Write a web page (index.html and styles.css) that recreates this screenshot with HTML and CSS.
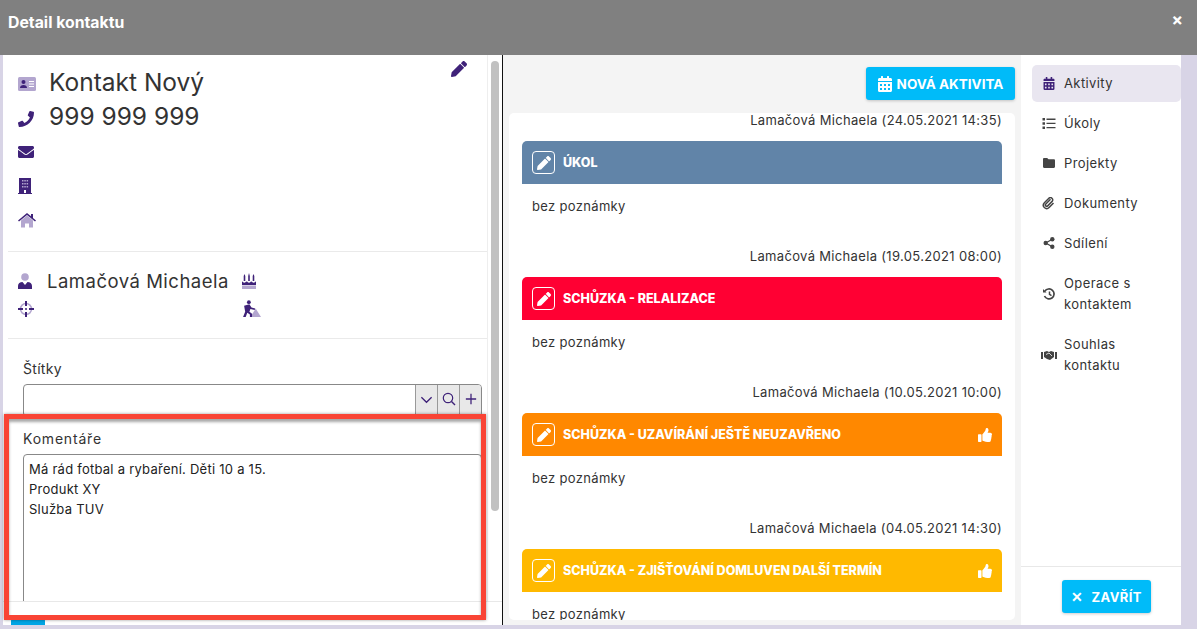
FILE: index.html
```html
<!DOCTYPE html>
<html lang="cs">
<head>
<meta charset="utf-8">
<title>Detail kontaktu</title>
<link rel="stylesheet" href="styles.css">
</head>
<body>
<svg class="defs" width="0" height="0" aria-hidden="true">
  <symbol id="pencil" viewBox="0 0 512 512"><path d="M497.9 142.1l-46.1 46.1c-4.7 4.7-12.3 4.7-17 0l-111-111c-4.7-4.7-4.7-12.3 0-17l46.1-46.1c18.7-18.7 49.1-18.7 67.9 0l60.1 60.1c18.8 18.7 18.8 49.1 0 67.9zM284.2 99.8L21.6 362.4.4 483.9c-2.9 16.4 11.4 30.6 27.8 27.8l121.5-21.3 262.6-262.6c4.7-4.7 4.7-12.3 0-17l-111-111c-4.8-4.7-12.4-4.7-17.1 0z"/></symbol>
  <symbol id="calendar" viewBox="0 0 448 512"><path d="M0 464c0 26.5 21.5 48 48 48h352c26.5 0 48-21.5 48-48V192H0v272zm320-196c0-6.6 5.4-12 12-12h40c6.6 0 12 5.4 12 12v40c0 6.6-5.4 12-12 12h-40c-6.6 0-12-5.4-12-12v-40zm0 128c0-6.6 5.4-12 12-12h40c6.6 0 12 5.4 12 12v40c0 6.6-5.4 12-12 12h-40c-6.6 0-12-5.4-12-12v-40zM192 268c0-6.6 5.4-12 12-12h40c6.6 0 12 5.4 12 12v40c0 6.6-5.4 12-12 12h-40c-6.6 0-12-5.4-12-12v-40zm0 128c0-6.6 5.4-12 12-12h40c6.6 0 12 5.4 12 12v40c0 6.6-5.4 12-12 12h-40c-6.6 0-12-5.4-12-12v-40zM64 268c0-6.6 5.4-12 12-12h40c6.6 0 12 5.4 12 12v40c0 6.6-5.4 12-12 12H76c-6.6 0-12-5.4-12-12v-40zm0 128c0-6.6 5.4-12 12-12h40c6.6 0 12 5.4 12 12v40c0 6.6-5.4 12-12 12H76c-6.6 0-12-5.4-12-12v-40zM400 64h-48V16c0-8.8-7.2-16-16-16h-32c-8.8 0-16 7.2-16 16v48H160V16c0-8.8-7.2-16-16-16h-32c-8.8 0-16 7.2-16 16v48H48C21.5 64 0 85.5 0 112v48h448v-48c0-26.5-21.5-48-48-48z"/></symbol>
  <symbol id="thumb" viewBox="0 0 512 512"><path d="M104 224H24c-13.255 0-24 10.745-24 24v240c0 13.255 10.745 24 24 24h80c13.255 0 24-10.745 24-24V248c0-13.255-10.745-24-24-24zM384 81.452c0 42.416-25.97 66.208-33.277 94.548h101.723c33.397 0 59.397 27.746 59.553 58.098.084 17.938-7.546 37.249-19.439 49.197l-.11.11c9.836 23.337 8.237 56.037-9.308 79.469 8.681 25.895-.069 57.704-16.382 74.757 4.298 17.598 2.244 32.575-6.148 44.632C440.202 511.587 389.616 512 346.839 512l-2.845-.001c-48.287-.017-87.806-17.598-119.56-31.725-15.957-7.099-36.821-15.887-52.651-16.178-6.54-.12-11.783-5.457-11.783-11.998v-213.77c0-3.2 1.282-6.271 3.558-8.521 39.614-39.144 56.648-80.587 89.117-113.111 14.804-14.832 20.188-37.236 25.393-58.902C282.515 39.293 291.817 0 312 0c24 0 72 8 72 81.452z"/></symbol>
</svg>

<div class="app">
  <header class="topbar">
    <h1 class="title">Detail kontaktu</h1>
    <span class="close-x">×</span>
  </header>

  <div class="frame">
    <section class="left">
      <div class="left-scroll">
        <div class="left-content">
          <div class="contact">
            <svg class="edit-ic"><use href="#pencil"/></svg>
            <div class="c-row c-row-big">
              <svg class="ic" viewBox="0 0 18 14" width="18" height="14"><rect width="18" height="14" rx="1.5" fill="#b3a6cf"/><circle cx="5.5" cy="5" r="2" fill="#3f2279"/><path d="M2 11c0-2 1.500-3 3.500-3s3.500 1 3.500 3z" fill="#3f2279"/><path d="M11 4.500h5M11 7h5M11 9.500h5" stroke="#fff" stroke-width="1"/></svg>
              <span class="big">Kontakt Nový</span>
            </div>
            <div class="c-row c-row-big">
              <svg class="ic ic-low" viewBox="0 0 512 512" width="16" height="16"><path fill="#3f2279" d="M493.4 24.600l-104-24c-11.300-2.600-22.900 3.300-27.500 13.900l-48 112c-4.200 9.800-1.400 21.300 6.900 28l60.600 49.600c-36 76.700-98.900 140.500-177.200 177.200l-49.600-60.600c-6.800-8.300-18.200-11.100-28-6.900l-112 48C3.900 366.500-2 378.100.6 389.400l24 104C27.100 504.200 36.700 512 48 512c256.100 0 464-207.500 464-464 0-11.200-7.700-20.900-18.600-23.400z"/></svg>
              <span class="big">999 999 999</span>
            </div>
            <div class="c-row">
              <svg class="ic" viewBox="0 0 512 512" width="16" height="16"><path fill="#3f2279" d="M502.300 190.800c3.900-3.100 9.700-.2 9.700 4.700V400c0 26.500-21.500 48-48 48H48c-26.500 0-48-21.500-48-48V195.600c0-5 5.700-7.800 9.700-4.700 22.400 17.400 52.100 39.500 154.100 113.600 21.100 15.400 56.700 47.800 92.200 47.600 35.700.3 72-32.800 92.300-47.600 102-74.100 131.600-96.300 154-113.700zM256 320c23.200.4 56.600-29.200 73.400-41.400 132.700-96.300 142.800-104.700 173.400-128.700 5.800-4.500 9.200-11.500 9.200-18.900v-19c0-26.500-21.500-48-48-48H48C21.500 64 0 85.500 0 112v19c0 7.400 3.400 14.300 9.200 18.900 30.600 23.900 40.700 32.400 173.400 128.700 16.800 12.200 50.200 41.800 73.400 41.400z"/></svg>
            </div>
            <div class="c-row">
              <svg class="ic" viewBox="0 0 14 16" width="14" height="16"><path fill="#3f2279" d="M1 0h12v15h1v1H0v-1h1z"/><g fill="#b3a6cf"><rect x="4" y="2" width="1.500" height="1.500"/><rect x="6.300" y="2" width="1.500" height="1.500"/><rect x="8.600" y="2" width="1.500" height="1.500"/><rect x="4" y="5" width="1.500" height="1.500"/><rect x="6.300" y="5" width="1.500" height="1.500"/><rect x="8.600" y="5" width="1.500" height="1.500"/><rect x="4" y="8" width="1.500" height="1.500"/><rect x="6.300" y="8" width="1.500" height="1.500"/><rect x="8.600" y="8" width="1.500" height="1.500"/></g><rect x="6" y="12" width="2" height="3" fill="#fff"/></svg>
            </div>
            <div class="c-row">
              <svg class="ic" viewBox="0 0 18 15" width="18" height="15"><path fill="#b3a6cf" d="M3 7.500 9 2.500l6 5V14.500h-4v-4H7v4H3z"/><path fill="#3f2279" d="M0 7.500 9 0l4 3.300V1h2v4l3 2.500-1 1.100L9 2 1 8.600z"/></svg>
            </div>
          </div>

          <div class="owner">
            <div class="o-cell">
              <svg class="ic" viewBox="0 0 14 16" width="14" height="16"><circle cx="7" cy="4" r="3.800" fill="#b3a6cf"/><path fill="#3f2279" d="M0 16v-3c0-2.500 2-4 4.500-4L7 12l2.500-3C12 9 14 10.500 14 13v3z"/></svg>
              <span class="owner-name">Lamačová Michaela</span>
            </div>
            <div class="o-cell o-side">
              <svg class="ic" viewBox="0 0 14 16" width="14" height="16"><path fill="#3f2279" d="M2.500 1 3.300 3v5h-1.600V3zM7 0l.8 3v5H6.200V3zM11.500 1l.8 2v5h-1.600V3z"/><path fill="#3f2279" d="M0 8.500c1.200 0 1.200 1.300 2.300 1.300S3.500 8.500 4.700 8.500 5.800 9.800 7 9.800s1.200-1.300 2.300-1.300 1.200 1.300 2.400 1.300S12.800 8.500 14 8.500V12H0z"/><rect y="12.500" width="14" height="3.500" fill="#b3a6cf"/></svg>
            </div>
            <div class="o-cell">
              <svg class="ic" viewBox="0 0 16 16" width="16" height="16"><circle cx="8" cy="8" r="5.500" fill="none" stroke="#b3a6cf" stroke-width="1.500"/><path stroke="#3f2279" stroke-width="2" d="M8 0v5M8 11v5M0 8h5M11 8h5"/><circle cx="8" cy="8" r="1" fill="#3f2279"/></svg>
            </div>
            <div class="o-cell o-side">
              <svg class="ic" viewBox="0 0 18 16" width="19" height="17"><path fill="#b3a6cf" d="M8 16l5-8 5 8z"/><circle cx="6.500" cy="2" r="1.800" fill="#3f2279"/><path fill="#3f2279" d="M2 5.500 7 4l2 3 3.500 1-.5 1.500L8 8.500 7 11l2.500 2v3H7.500v-2.300L5 12l-1.500 4H1l2-5z"/></svg>
            </div>
          </div>

          <div class="form">
            <label class="f-label">Štítky</label>
            <div class="tag-input">
              <div class="tag-field"></div>
              <button class="tag-btn"><svg viewBox="0 0 14 14" width="13" height="13"><path d="M1.500 4.500 7 10l5.500-5.500" fill="none" stroke="#3f2279" stroke-width="1.400"/></svg></button>
              <button class="tag-btn"><svg viewBox="0 0 14 14" width="14" height="14"><circle cx="6" cy="6" r="4.700" fill="none" stroke="#3f2279" stroke-width="1.200"/><path d="M9.500 9.500 13 13" stroke="#3f2279" stroke-width="1.400"/></svg></button>
              <button class="tag-btn"><svg viewBox="0 0 14 14" width="12" height="12"><path d="M7 1v12M1 7h12" stroke="#3f2279" stroke-width="1.500"/></svg></button>
            </div>
            <label class="f-label f-label-2">Komentáře</label>
            <div class="comment">Má rád fotbal a rybaření. Děti 10 a 15.<br>Produkt XY<br>Služba TUV</div>
          </div>
        </div>
        <div class="scrollbar"><div class="thumb"></div></div>
      </div>
      <div class="left-foot"><div class="clipped-btn"></div></div>
    </section>

    <section class="middle">
      <div class="mid-top">
        <button class="btn-new"><svg width="14" height="16"><use href="#calendar"/></svg>NOVÁ AKTIVITA</button>
      </div>
      <div class="feed">
        <article class="act act-first">
          <div class="author">Lamačová Michaela (24.05.2021 14:35)</div>
          <div class="bar c-blue"><span class="pen"><svg width="14" height="14"><use href="#pencil"/></svg></span><span class="bar-t">ÚKOL</span></div>
          <div class="note">bez poznámky</div>
        </article>
        <article class="act">
          <div class="author">Lamačová Michaela (19.05.2021 08:00)</div>
          <div class="bar c-red"><span class="pen"><svg width="14" height="14"><use href="#pencil"/></svg></span><span class="bar-t">SCHŮZKA - RELALIZACE</span></div>
          <div class="note">bez poznámky</div>
        </article>
        <article class="act">
          <div class="author">Lamačová Michaela (10.05.2021 10:00)</div>
          <div class="bar c-orange"><span class="pen"><svg width="14" height="14"><use href="#pencil"/></svg></span><span class="bar-t">SCHŮZKA - UZAVÍRÁNÍ JEŠTĚ NEUZAVŘENO</span><svg class="thumb-ic" width="14" height="14"><use href="#thumb"/></svg></div>
          <div class="note">bez poznámky</div>
        </article>
        <article class="act">
          <div class="author">Lamačová Michaela (04.05.2021 14:30)</div>
          <div class="bar c-yellow"><span class="pen"><svg width="14" height="14"><use href="#pencil"/></svg></span><span class="bar-t">SCHŮZKA - ZJIŠŤOVÁNÍ DOMLUVEN DALŠÍ TERMÍN</span><svg class="thumb-ic" width="14" height="14"><use href="#thumb"/></svg></div>
          <div class="note">bez poznámky</div>
        </article>
      </div>
    </section>

    <aside class="nav">
      <ul class="nav-list">
        <li class="nav-item active"><svg class="nav-ic act-ic" viewBox="0 0 448 512" width="11" height="13"><use href="#calendar"/></svg><span>Aktivity</span></li>
        <li class="nav-item"><svg class="nav-ic" viewBox="0 0 13 11" width="13" height="11"><path d="M0 0h2.500v2.500H0zM0 4.200h2.500v2.500H0zM0 8.400h2.500v2.500H0zM4 .6h9v1.300H4zM4 4.800h9v1.300H4zM4 9h9v1.300H4z"/></svg><span>Úkoly</span></li>
        <li class="nav-item"><svg class="nav-ic" viewBox="0 0 12 10" width="12" height="10"><path d="M0 1.200C0 .5.500 0 1.200 0h3l1.300 1.300h5.300c.7 0 1.200.5 1.200 1.200v6.300c0 .7-.5 1.200-1.200 1.200H1.200C.5 10 0 9.500 0 8.800z"/></svg><span>Projekty</span></li>
        <li class="nav-item"><svg class="nav-ic" viewBox="0 0 12 13" width="12" height="13"><path d="M7.500 2.300 2.800 7a1.300 1.300 0 0 0 1.900 1.900L9.400 4A2.300 2.300 0 0 0 6.100 1L1.400 5.800a3.300 3.300 0 0 0 4.700 4.700L10.500 6" fill="none" stroke="#444" stroke-width="1.500"/></svg><span>Dokumenty</span></li>
        <li class="nav-item"><svg class="nav-ic" viewBox="0 0 11 12" width="11" height="12"><circle cx="2.200" cy="6" r="2.200"/><circle cx="8.800" cy="2.200" r="2.200"/><circle cx="8.800" cy="9.800" r="2.200"/><path d="M2.200 6l6.600-3.800M2.200 6l6.600 3.800" stroke="#444" stroke-width="1.300"/></svg><span>Sdílení</span></li>
        <li class="nav-item two"><svg class="nav-ic" viewBox="0 0 13 12" width="12" height="12"><path d="M2.300 3.300A5 5 0 1 1 2 8" fill="none" stroke="#444" stroke-width="1.700"/><path d="M.5 1v3.500H4z"/><path d="M7 3.500V6.300l2 1.300" fill="none" stroke="#444" stroke-width="1.500"/></svg><span>Operace s kontaktem</span></li>
        <li class="nav-item two"><svg class="nav-ic" viewBox="0 0 16 10" width="15" height="10"><path d="M0 2h2v7H0zM14 2h2v7h-2zM3 2l3-1 2 1 2-1 3 1v5L9 10 6 9 3 7z"/><path d="M5 4.500 8 3l3 3" fill="none" stroke="#fff" stroke-width=".8"/></svg><span>Souhlas kontaktu</span></li>
      </ul>
      <div class="nav-foot">
        <button class="btn-close"><span class="btn-x">✕</span>ZAVŘÍT</button>
      </div>
    </aside>
  </div>
</div>

<div class="highlight"></div>
</body>
</html>
```

FILE: styles.css
```css
* { box-sizing: border-box; }
html, body { margin: 0; padding: 0; height: 629px; overflow: hidden; }
body { background: #d8d4e6; font-family: Inter, "Noto Sans", sans-serif; color: #333; position: relative; }
.defs { position: absolute; }
button { font-family: inherit; border: 0; padding: 0; }

.app { display: flex; flex-direction: column; height: 625px; }
.topbar { flex: 0 0 55px; background: #808080; display: flex; justify-content: space-between; padding: 14px 14px 0 8px; }
.title { margin: 0; font-size: 15.8px; line-height: 17px; font-weight: 700; color: #fff; }
.close-x { color: #fff; font-size: 17px; line-height: 12px; font-weight: 700; }

.frame { flex: 1; min-height: 0; display: flex; margin: 0 16px 0 3px; }

/* left */
.left { flex: 0 0 500px; display: flex; flex-direction: column; background: #fff; border-right: 1px solid #111; overflow: hidden; }
.left-scroll { flex: 0 0 546px; display: flex; overflow: hidden; }
.left-content { flex: 0 0 484px; padding-left: 5px; }
.scrollbar { flex: 1; border-left: 1px solid #eee; padding: 6px 3px 0 3px; }
.thumb { height: 450px; width: 8px; background: #c1c1c1; border-radius: 4px; }
.left-foot { flex: 1; border-top: 1px solid #e8e8e8; padding-left: 8px; position: relative; }
.clipped-btn { position: absolute; left: 8px; top: 16px; width: 34px; height: 10px; background: #00a5e5; border-radius: 3px 3px 0 0; }

.contact { position: relative; height: 197px; border-bottom: 1px solid #eaeaea; padding-top: 10px; }
.edit-ic { position: absolute; left: 443px; top: 6px; width: 16px; height: 16px; fill: #3f2279; }
.c-row { height: 34px; display: flex; align-items: center; padding-left: 10px; }
.ic { flex: none; display: block; }
.c-row .ic { margin-top: 4px; }
.c-row .ic-low { margin-top: 6px; }
.big { position: absolute; left: 41px; font-size: 24.5px; line-height: 34px; color: #333; font-weight: 400; }

.owner { height: 87px; border-bottom: 1px solid #eaeaea; display: grid; grid-template-columns: 226px 1fr; grid-template-rows: 31px 25px; padding: 13px 0 0 10px; }
.o-cell { display: flex; align-items: center; }
.owner-name { font-size: 18.5px; letter-spacing: .5px; margin-left: 15px; color: #333; white-space: nowrap; }
.o-side { margin-left: -2px; }

.form { padding: 19px 0 0 15px; }
.f-label { display: block; font-size: 14px; line-height: 22px; letter-spacing: .3px; color: #333; }
.f-label-2 { margin-top: 11px; letter-spacing: .8px; }
.tag-input { margin-top: 4px; width: 459px; height: 33px; display: flex; border: 1px solid #888; border-radius: 4px; overflow: hidden; }
.tag-field { flex: 1; }
.tag-btn { flex: 0 0 22px; background: #e8e8e8; border-left: 1px solid #999; display: flex; align-items: center; justify-content: center; padding-bottom: 3px; }
.comment { margin-top: 4px; width: 459px; height: 220px; border: 1px solid #888; border-radius: 4px; padding: 4px 5px; font-size: 13px; line-height: 20px; letter-spacing: .25px; color: #222; }

/* middle */
.middle { flex: 0 0 518px; background: #f4f4f4; display: flex; flex-direction: column; padding: 0 6px 5px; min-height: 0; }
.mid-top { flex: 0 0 58px; display: flex; justify-content: flex-end; padding-top: 12px; }
.btn-new { width: 149px; height: 33px; background: #00bbf9; color: #fff; font-size: 13.5px; font-weight: 700; border-radius: 3px; box-shadow: 0 1px 3px rgba(0,0,0,.2); display: flex; align-items: center; justify-content: center; gap: 5px; }
.btn-new svg { fill: #fff; }
.feed { flex: 1; min-height: 0; background: #fff; border-radius: 5px; overflow: hidden; padding: 0 13px; }
.act { height: 136px; }
.act-first { margin-top: -3px; }
.author { text-align: right; font-size: 13px; line-height: 20px; letter-spacing: .33px; color: #333; height: 20px; }
.bar { height: 43px; margin-top: 11px; border-radius: 5px 5px 0 0; display: flex; align-items: center; padding: 0 10px; color: #fff; }
.pen { width: 23px; height: 23px; border: 1px solid #fff; border-radius: 4px; display: flex; align-items: center; justify-content: center; margin-right: 8px; fill: #fff; }
.bar-t { font-size: 12.5px; font-weight: 800; flex: 1; }
.thumb-ic { fill: #fff; }
.c-blue { background: #6184a8; }
.c-red { background: #ff0033; }
.c-orange { background: #ff8800; }
.c-yellow { background: #ffb900; }
.note { padding: 12px 10px 0; font-size: 13px; line-height: 20px; letter-spacing: .33px; color: #333; }

/* nav */
.nav { flex: 0 0 160px; background: #fff; display: flex; flex-direction: column; }
.nav-list { list-style: none; margin: 0; padding: 10px 0 0 11px; flex: 1; }
.nav-item { height: 40px; display: flex; align-items: center; font-size: 13px; line-height: 21px; letter-spacing: .4px; color: #333; padding-left: 9px; }
.nav-item:first-child { height: 37px; margin-bottom: 1px; }
.nav-item.two { height: 61px; }
.nav-item.active { background: #e9e6f0; border-radius: 5px; }
.nav-ic { flex: none; width: 16px; margin-right: 7px; fill: #444; }
.nav-ic.act-ic { fill: #3f2279; }
.nav-item.two span { width: 90px; }
.nav-foot { flex: 0 0 59px; border-top: 1px solid #e8e8e8; padding: 13px 0 0 41px; }
.btn-close { width: 89px; height: 33px; background: #00bbf9; color: #fff; font-size: 13px; font-weight: 700; letter-spacing: .4px; border-radius: 3px; box-shadow: 0 1px 3px rgba(0,0,0,.2); display: flex; align-items: center; justify-content: center; gap: 8px; }
.btn-x { font-size: 14px; }

/* annotation overlay */
.highlight { position: absolute; left: 4px; top: 414px; width: 482px; height: 206px; border: 5px solid #f94435; box-shadow: inset 0 3px 3px rgba(0,0,0,.35), 0 0 3px rgba(0,0,0,.4); }
```
